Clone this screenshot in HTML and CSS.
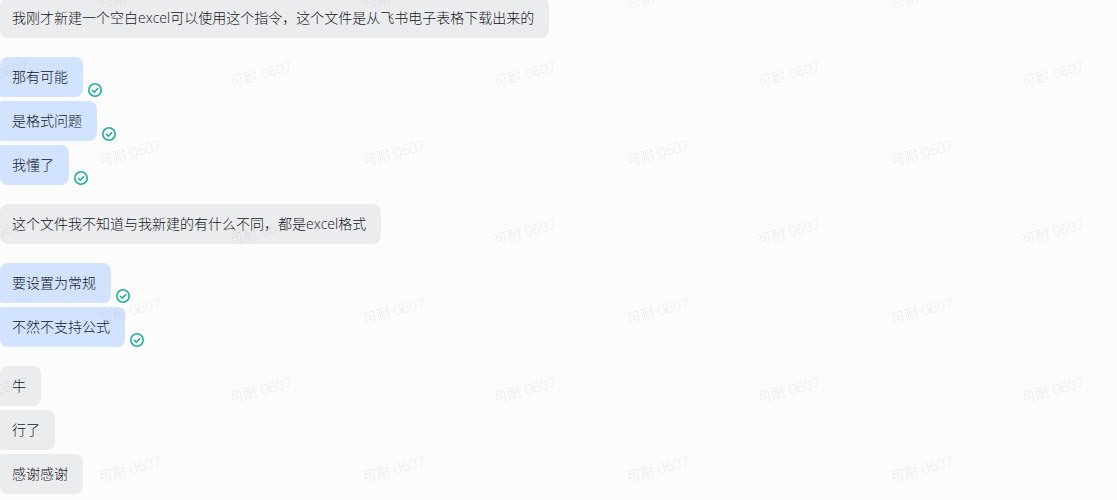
FILE: index.html
```html
<!DOCTYPE html>
<html lang="zh-CN">
<head>
  <meta charset="UTF-8" />
  <meta name="viewport" content="width=device-width, initial-scale=1.0"/>
  <title>Chat</title>
  <link rel="stylesheet" href="styles.css">
</head>
<body>
  <!-- shared icons -->
  <svg class="defs" width="0" height="0" aria-hidden="true">
    <symbol id="icon-read" viewBox="0 0 14 14">
      <circle cx="7" cy="7" r="6.2" />
      <path d="M4 7 L6.3 9.1 L10.1 5.3" />
    </symbol>
  </svg>

  <main class="chat">
    <section class="group other">
      <div class="message"><p class="bubble">我刚才新建一个空白excel可以使用这个指令，这个文件是从飞书电子表格下载出来的</p></div>
    </section>

    <section class="group mine">
      <div class="message"><p class="bubble">那有可能</p><svg class="read"><use href="#icon-read" /></svg></div>
      <div class="message"><p class="bubble">是格式问题</p><svg class="read"><use href="#icon-read" /></svg></div>
      <div class="message"><p class="bubble">我懂了</p><svg class="read"><use href="#icon-read" /></svg></div>
    </section>

    <section class="group other">
      <div class="message"><p class="bubble">这个文件我不知道与我新建的有什么不同，都是excel格式</p></div>
    </section>

    <section class="group mine">
      <div class="message"><p class="bubble">要设置为常规</p><svg class="read"><use href="#icon-read" /></svg></div>
      <div class="message"><p class="bubble">不然不支持公式</p><svg class="read"><use href="#icon-read" /></svg></div>
    </section>

    <section class="group other">
      <div class="message"><p class="bubble">牛</p></div>
      <div class="message"><p class="bubble">行了</p></div>
      <div class="message"><p class="bubble">感谢感谢</p></div>
    </section>
  </main>

  <svg class="watermark" aria-hidden="true">
    <pattern id="mark" x="65" y="34" width="264" height="158" patternUnits="userSpaceOnUse">
      <text x="65" y="124" transform="rotate(-15 65 119)">可耐 0607</text>
      <text x="196" y="45" transform="rotate(-15 196 40)">可耐 0607</text>
    </pattern>
    <rect width="100%" height="100%" fill="url(#mark)" />
  </svg>
</body>
</html>
```

FILE: styles.css
```css
* {
  box-sizing: border-box;
}

body {
  margin: 0;
  font-family: "Open Sans", "Noto Sans CJK SC", sans-serif;
  font-size: 14px;
  font-weight: 300;
  line-height: 20px;
  background: #fcfcfc;
  color: #14171c;
  position: relative;
  overflow: hidden;
}

.defs {
  position: absolute;
}

.chat {
  display: flex;
  flex-direction: column;
  gap: 19px;
  margin-top: -2px;
  padding-bottom: 6px;
}

.group {
  display: flex;
  flex-direction: column;
  gap: 4px;
}

.message {
  display: flex;
  align-items: flex-end;
  gap: 5px;
}

.bubble {
  margin: 0;
  padding: 10px 15px 10px 12px;
  border-radius: 2px 8px 8px 2px;
}

.message:first-child .bubble {
  border-top-left-radius: 8px;
}

.message:last-child .bubble {
  border-bottom-left-radius: 8px;
}

.other .bubble {
  background: #ebecee;
}

.mine .bubble {
  background: #d1e3ff;
}

.read {
  width: 14px;
  height: 14px;
  flex: none;
  fill: none;
  stroke: #1fae9a;
  stroke-width: 1.6;
}

.watermark {
  position: absolute;
  top: 0;
  left: 0;
  width: 100%;
  height: 100%;
  pointer-events: none;
}

.watermark text {
  font-size: 14px;
  text-anchor: middle;
  fill: #1f2329;
  fill-opacity: 0.09;
}
```
